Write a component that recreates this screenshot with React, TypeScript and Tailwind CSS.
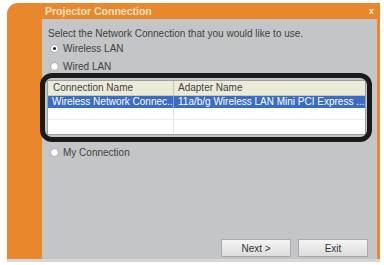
import React from "react";

function Radio({ checked }: { checked?: boolean }) {
  return (
    <span className="w-[9px] h-[9px] rounded-full bg-white border border-[#a4a8ac] flex items-center justify-center shrink-0">
      {checked && <span className="w-[3px] h-[3px] rounded-full bg-[#222]" />}
    </span>
  );
}

export default function App() {
  const font = { fontFamily: '"Liberation Sans", Arial, sans-serif' };
  return (
    <div className="w-[384px] h-[265px] bg-white pt-[3px] pl-[7px]" style={font}>
      <div className="w-[373px] h-[259px] rounded-tl-[11px] bg-[#e8872c] flex flex-col overflow-hidden border-b-[3px] border-[#d4d6d8]">
        <div className="h-[16px] flex items-center justify-between pl-[38px] pr-[6px] shrink-0">
          <span className="text-[10.5px] font-bold text-[#fde2c2] leading-none">Projector Connection</span>
          <span className="text-[9px] font-bold text-[#fff0dc] leading-none">x</span>
        </div>
        <div className="flex-1 ml-[35px] mr-[3px] bg-[#c3c5c7] relative flex flex-col text-[#424242]">
          <div className="mt-[9px] pl-[6px] text-[10px] leading-[12px]">
            Select the Network Connection that you would like to use.
          </div>
          <div className="mt-[2px] pl-[8px] h-[12px] flex items-center gap-[4px] text-[10px]">
            <Radio checked />
            <span>Wireless LAN</span>
          </div>
          <div className="mt-[6px] pl-[8px] h-[12px] flex items-center gap-[4px] text-[10px]">
            <Radio />
            <span>Wired LAN</span>
          </div>
          <div className="mt-[8px] ml-[5px] w-[319px] h-[55px] bg-white border border-[#9aa0a6] flex flex-col text-[10px] leading-none">
            <div className="h-[15px] bg-[#ecead9] border-b border-[#c9c6b5] flex">
              <div className="w-[126px] border-r border-[#c9c6b5] pl-[5px] flex items-center">Connection Name</div>
              <div className="flex-1 pl-[4px] flex items-center">Adapter Name</div>
            </div>
            <div className="h-[12px] bg-[#3a6cc6] text-white flex">
              <div className="w-[126px] border-r border-[#7fa0dc] pl-[4px] flex items-center whitespace-nowrap overflow-hidden">Wireless Network Connec...</div>
              <div className="flex-1 pl-[4px] flex items-center whitespace-nowrap overflow-hidden">11a/b/g Wireless LAN Mini PCI Express ...</div>
            </div>
            <div className="h-[12px] border-b border-[#ececec] flex">
              <div className="w-[126px] border-r border-[#e2e2e2]" />
            </div>
            <div className="flex-1 flex">
              <div className="w-[126px] border-r border-[#e2e2e2]" />
            </div>
          </div>
          <div className="absolute left-[-2px] top-[54px] w-[332px] h-[69px] border-[5px] border-[#1a1a1a] rounded-[12px]" />
          <div className="mt-[11px] pl-[8px] h-[12px] flex items-center gap-[4px] text-[10px]">
            <Radio />
            <span>My Connection</span>
          </div>
          <div className="mt-auto mb-[2px] flex justify-end gap-[7px] pr-[9px]">
            <div className="w-[70px] h-[18px] bg-gradient-to-b from-[#f4f4f4] to-[#dcdcdc] border border-[#a8aaac] flex items-center justify-center text-[10px] text-[#333]">
              Next &gt;
            </div>
            <div className="w-[70px] h-[18px] bg-gradient-to-b from-[#f4f4f4] to-[#dcdcdc] border border-[#a8aaac] flex items-center justify-center text-[10px] text-[#333]">
              Exit
            </div>
          </div>
        </div>
      </div>
    </div>
  );
}
